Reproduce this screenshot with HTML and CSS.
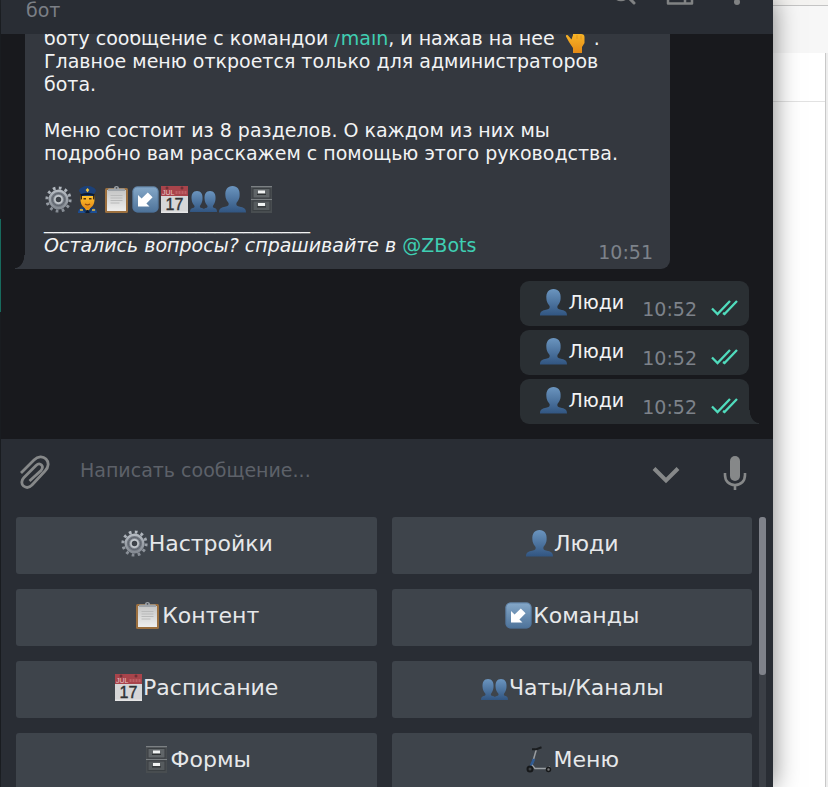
FILE: index.html
```
<!DOCTYPE html>
<html lang="ru">
<head>
    <meta charset="UTF-8">
    <meta name="viewport" content="width=device-width, initial-scale=1.0">
    <title>Чат с ботом</title>
    <link rel="stylesheet" href="styles.css">
</head>
<body>
    <!-- Emoji used in the messages and on the keyboard -->
    <svg class="sprite" aria-hidden="true">
        <defs>
            <linearGradient id="blue" x1="0" y1="0" x2="0" y2="1">
                <stop offset="0" stop-color="#6b95bf"/>
                <stop offset="1" stop-color="#315581"/>
            </linearGradient>
            <linearGradient id="tile" x1="0" y1="0" x2="0" y2="1">
                <stop offset="0" stop-color="#86a9c9"/>
                <stop offset="1" stop-color="#4d7299"/>
            </linearGradient>
            <linearGradient id="steel" x1="0" y1="0" x2="0" y2="1">
                <stop offset="0" stop-color="#b4bac1"/>
                <stop offset="1" stop-color="#858b93"/>
            </linearGradient>
            <linearGradient id="paper" x1="0" y1="0" x2="0" y2="1">
                <stop offset="0" stop-color="#c4c5c5"/>
                <stop offset="1" stop-color="#eeeeed"/>
            </linearGradient>
            <linearGradient id="skin" x1="0" y1="0" x2="0" y2="1">
                <stop offset="0" stop-color="#ffc62e"/>
                <stop offset="1" stop-color="#e58a16"/>
            </linearGradient>
        </defs>
        <symbol id="gear" viewBox="0 0 27 27">
            <circle cx="13.5" cy="13.5" r="11.6" fill="none" stroke="url(#steel)" stroke-width="3" stroke-dasharray="2.7 3.37"/>
            <circle cx="13.5" cy="13.5" r="8.8" fill="#70767f" stroke="url(#steel)" stroke-width="2.4"/>
            <circle cx="13.5" cy="13.5" r="6" fill="#858b94" stroke="#5d636c" stroke-width="1"/>
            <circle cx="13.5" cy="13.5" r="3.6" fill="#3d4249" stroke="#c3c8cd" stroke-width="1.7"/>
        </symbol>
        <symbol id="police" viewBox="0 0 27 27">
            <path d="M4 27c0-4 3-6 9.500-6s9.500 2 9.500 6z" fill="#1d4e94"/>
            <path d="M10 19h7v3l-3.500 4-3.500-4z" fill="#e79c1a"/>
            <path d="M10 21l3.500 6L17 21l2 1-3 5h-5l-3-5z" fill="#163766"/>
            <path d="M12.500 24h2l1 3h-4z" fill="#0b1b33"/>
            <path d="M6.500 9h14v5c0 5-3.500 8.500-7 8.500S6.500 19 6.500 14z" fill="url(#skin)"/>
            <path d="M6 8h2v5l-1.200 1zM21 8h-2v5l1.200 1z" fill="#3c2914"/>
            <path d="M5 5c0-3 5-5 8.500-5S22 2 22 5l-2 3v2H7V8z" fill="#1c4179"/>
            <path d="M7 8c4-1.500 9-1.500 13 0v2c-4-1.200-9-1.200-13 0z" fill="#0c1a2f"/>
            <path d="M13.500 2l1.800 2-1.800 2.600L11.700 4z" fill="#f4c63c"/>
            <path d="M9.500 12.700h2.500M15 12.700h2.500" stroke="#50330d" stroke-width="1.500"/>
            <path d="M11 18q2.500 1.800 5 0" fill="none" stroke="#914c12" stroke-width="1.200"/>
            <path d="M6 24h3M18 24h3" stroke="#e9bd3a" stroke-width="1.300"/>
        </symbol>
        <symbol id="clipboard" viewBox="0 0 27 27">
            <rect x="2" y="2" width="23" height="25" rx="1.500" fill="#9c703f"/>
            <rect x="4" y="4" width="19" height="21" fill="url(#paper)"/>
            <path d="M7.500 9.500h12M7.500 12h12M7.500 14.500h12M7.500 17h9" stroke="#b9baba" stroke-width="1"/>
            <path d="M5 5V3.500q0-1 1-1h5C11 .8 12 0 13.500 0S16 .8 16 2.500h5q1 0 1 1V5z" fill="#9ea3a8"/>
            <circle cx="13.500" cy="1.800" r=".9" fill="#4c5056"/>
        </symbol>
        <symbol id="arrow" viewBox="0 0 27 27">
            <rect x=".5" y=".5" width="26" height="26" rx="5" fill="url(#tile)"/>
            <rect x="1" y="1" width="25" height="25" rx="4.500" fill="none" stroke="#4c719b" stroke-opacity=".6"/>
            <path d="M6 20.500V9l3.600 3.600 6.200-6.200 4.800 4.800-6.200 6.200 3.100 3.100z" fill="#fff"/>
        </symbol>
        <symbol id="calendar" viewBox="0 0 27 27">
            <path d="M0 0h27v27H0z" fill="#d6d6d7"/>
            <path d="M0 0h27v10H0z" fill="#a8444b"/>
            <path d="M0 25.500h27V27H0z" fill="#e6e6e6"/>
            <circle cx="6" cy="2" r="1.500" fill="#6f3137"/>
            <circle cx="21" cy="2" r="1.500" fill="#6f3137"/>
            <path d="M14.500 6.500h11" stroke="#bd5f65" stroke-width="3" stroke-dasharray="2 1"/>
            <text class="cal-month" x="1" y="9">JUL</text>
            <text class="cal-day" x="13.500" y="24" text-anchor="middle">17</text>
        </symbol>
        <symbol id="people" viewBox="0 0 27 27">
            <path d="M13 26c0-3 1-3.800 3.700-4.300 1.100-.3 1-1.600.4-2.500-1.500-1.500-2.300-3.500-2.500-5.900C14.200 8 16 5 20 5s6 3 5.500 8.300c-.2 2.400-1 4.400-2.200 5.900-.6.900-.6 2.200.4 2.500 2.500.5 3.300 1.300 3.300 4.300z" fill="url(#blue)"/>
            <path d="M0 26c0-3 1-3.800 3.700-4.300 1.100-.3 1-1.600.4-2.500-1.500-1.500-2.300-3.500-2.500-5.900C1.200 8 3 5 7 5s6 3 5.500 8.300c-.2 2.400-1 4.400-2.200 5.900-.6.900-.6 2.200.4 2.500 3 .5 4 1.300 4 4.300z" fill="url(#blue)"/>
        </symbol>
        <symbol id="person" viewBox="0 0 27 27">
            <path d="M0 26.500c0-3.600 1.500-4.700 5-5.500 3-.6 4.700-1.200 4.700-3 0-1-.4-1.600-1.200-2.500-1.300-1.600-1.900-3.400-2.100-5.700C5.800 3.400 8.700 0 13.500 0s7.700 3.400 7.100 9.800c-.2 2.300-.8 4.100-2.100 5.700-.8.900-1.200 1.500-1.200 2.500 0 1.800 1.700 2.400 4.700 3 3.500.8 5 1.900 5 5.500z" fill="url(#blue)"/>
        </symbol>
        <symbol id="cabinet" viewBox="0 0 27 27">
            <rect x="3" y="0" width="21" height="27" fill="#484d50"/>
            <path d="M3 .7h21M3 13.500h21" stroke="#7b8083" stroke-width="1.200"/>
            <rect x="5" y="2.500" width="17" height="9.500" fill="#606568" stroke="#3a3f42"/>
            <rect x="5" y="15" width="17" height="9.500" fill="#565b5e" stroke="#3a3f42"/>
            <path d="M10 4.500h7v3h-7zM10 17h7v3h-7z" fill="#f0f2f2"/>
            <path d="M9 8.300h9M9 20.800h9" stroke="#2d3133" stroke-width="1.200"/>
        </symbol>
        <symbol id="scooter" viewBox="0 0 27 27">
            <path d="M5 22L10.500 3" stroke="#9a9ea1" stroke-width="1.500"/>
            <path d="M6 3.200h4.500l5-2" fill="none" stroke="#1a1d1f" stroke-width="2"/>
            <path d="M4.500 21l3.500-8" stroke="#2f5b94" stroke-width="2.600"/>
            <path d="M6 19l3 3.500h12l3-1.500" fill="none" stroke="#9a9fa4" stroke-width="1.500"/>
            <circle cx="4" cy="23" r="2.500" fill="#3d4145" stroke="#16181a" stroke-width="2"/>
            <circle cx="22.500" cy="23.500" r="2" fill="#777" stroke="#16181a" stroke-width="1.500"/>
        </symbol>
        <symbol id="finger" viewBox="0 0 27 27">
            <path d="M12 0h4v8h4q3.500 0 3.500 3v6l-2.500 4v6h-9v-5l-4-6-3-5.500c-.4-1.500 1.600-2 2.500-.5l3 3.500L12 9z" fill="url(#skin)"/>
            <path d="M16 9v4M20 9.500v4" stroke="#dc9219" stroke-width=".8"/>
        </symbol>
        <symbol id="checks" viewBox="0 0 27 16">
            <path d="M1 8.500l5.500 5.500L19 1M12 13l1.500 1L26 1" fill="none" stroke="#50dcbd" stroke-width="2.300"/>
        </symbol>
    </svg>

    <div class="edge"><div class="edge-mark"></div></div>

    <main class="app">
        <header class="header">
            <span class="status">бот</span>
            <div class="header-icons">
                <button aria-label="Поиск"><svg width="24" height="24" viewBox="0 0 24 24"><circle cx="9" cy="10" r="8" fill="none" stroke="#808283" stroke-width="2.500"/><path d="M15 14l7 7" stroke="#808283" stroke-width="3" stroke-linecap="round"/></svg></button>
                <button aria-label="Боковая панель"><svg width="28" height="24" viewBox="0 0 28 24"><path d="M2 3h24v18.500H2zM19 3v19" fill="none" stroke="#808283" stroke-width="2.500" stroke-linejoin="round"/></svg></button>
                <button aria-label="Ещё"><svg width="6" height="24" viewBox="0 0 6 24"><circle cx="3" cy="4" r="3" fill="#808283"/><circle cx="3" cy="12" r="3" fill="#808283"/><circle cx="3" cy="20" r="3" fill="#808283"/></svg></button>
            </div>
        </header>

        <section class="chat">
            <article class="bubble incoming">
                <p>
                    боту сообщение с командой <a href="#">/main</a>, и нажав на нее <svg class="emoji"><use href="#finger"/></svg> .<br>
                    Главное меню откроется только для администраторов<br>
                    бота.
                </p>
                <p>
                    Меню состоит из 8 разделов. О каждом из них мы<br>
                    подробно вам расскажем с помощью этого руководства.
                </p>
                <div class="emoji-row">
                    <svg class="emoji"><use href="#gear"/></svg>
                    <svg class="emoji"><use href="#police"/></svg>
                    <svg class="emoji"><use href="#clipboard"/></svg>
                    <svg class="emoji"><use href="#arrow"/></svg>
                    <svg class="emoji"><use href="#calendar"/></svg>
                    <svg class="emoji"><use href="#people"/></svg>
                    <svg class="emoji"><use href="#person"/></svg>
                    <svg class="emoji"><use href="#cabinet"/></svg>
                </div>
                <div>____________________________</div>
                <div class="message-end">
                    <span><em>Остались вопросы? спрашивайте в</em> <a href="#">@ZBots</a></span>
                    <time>10:51</time>
                </div>
            </article>

            <article class="bubble outgoing">
                <span class="label"><svg class="emoji"><use href="#person"/></svg>Люди</span>
                <time>10:52</time>
                <svg class="checks"><use href="#checks"/></svg>
            </article>
            <article class="bubble outgoing">
                <span class="label"><svg class="emoji"><use href="#person"/></svg>Люди</span>
                <time>10:52</time>
                <svg class="checks"><use href="#checks"/></svg>
            </article>
            <article class="bubble outgoing last">
                <span class="label"><svg class="emoji"><use href="#person"/></svg>Люди</span>
                <time>10:52</time>
                <svg class="checks"><use href="#checks"/></svg>
            </article>
        </section>

        <form class="composer">
            <button type="button" aria-label="Прикрепить файл">
                <svg width="32" height="36" viewBox="0 0 32 36"><path d="M2 18L15 5c4-4 9-4 12-1s3 8-1 12L13 30c-3 3-6 3-8.500 1s-2-6 .5-8.500L17 10.500c2-2 4-2 5.500-.5s1 3.500-.5 5.500L10.500 26" fill="none" stroke="#868889" stroke-width="2.800"/></svg>
            </button>
            <input type="text" aria-label="Сообщение" placeholder="Написать сообщение...">
            <button type="button" aria-label="Скрыть клавиатуру">
                <svg width="28" height="36" viewBox="0 0 28 36"><path d="M2 13.500l12 12 12-12" fill="none" stroke="#868889" stroke-width="4"/></svg>
            </button>
            <button type="button" aria-label="Голосовое сообщение">
                <svg width="24" height="36" viewBox="0 0 24 36"><rect x="7" y="1" width="10" height="25" rx="5" fill="#868889"/><path d="M2 18v2c0 6 4 10 10 10s10-4 10-10v-2M12 30v5" fill="none" stroke="#868889" stroke-width="2.600"/></svg>
            </button>
        </form>

        <section class="keyboard">
            <div class="keys">
                <button><svg class="emoji"><use href="#gear"/></svg>Настройки</button>
                <button><svg class="emoji"><use href="#person"/></svg>Люди</button>
                <button><svg class="emoji"><use href="#clipboard"/></svg>Контент</button>
                <button><svg class="emoji"><use href="#arrow"/></svg>Команды</button>
                <button><svg class="emoji"><use href="#calendar"/></svg>Расписание</button>
                <button><svg class="emoji"><use href="#people"/></svg>Чаты/Каналы</button>
                <button><svg class="emoji"><use href="#cabinet"/></svg>Формы</button>
                <button><svg class="emoji"><use href="#scooter"/></svg>Меню</button>
            </div>
            <div class="track"><div class="thumb"></div></div>
        </section>
    </main>

    <!-- Window behind the chat -->
    <aside class="behind">
        <div class="behind-title"></div>
        <div class="behind-bar"></div>
        <div class="behind-page"><div class="behind-head"></div></div>
    </aside>
</body>
</html>
```
FILE: styles.css
```
* {
    box-sizing: border-box;
}
body {
    margin: 0;
    height: 100vh;
    display: flex;
    overflow: hidden;
    background: #fff;
    font-family: "DejaVu Sans", sans-serif;
    font-size: 19px;
    line-height: 23px;
    color: #f2f3f4;
}
button {
    padding: 0;
    border: none;
    background: none;
    color: inherit;
    font: inherit;
    cursor: pointer;
}
svg {
    display: block;
}
a {
    color: #3fcfb3;
    text-decoration: none;
}
p {
    margin: 0 0 23px;
}
time {
    color: #7d828a;
}
.sprite {
    position: absolute;
    width: 0;
    height: 0;
}
.cal-month {
    font: 7px "Liberation Sans", sans-serif;
    fill: #e6c3c5;
}
.cal-day {
    font: 16px "Liberation Sans", sans-serif;
    fill: #303234;
    stroke: #303234;
    stroke-width: 0.4px;
}
.emoji {
    display: inline-block;
    flex: none;
    width: 27px;
    height: 27px;
    margin: -2px 1px;
    vertical-align: middle;
}
p .emoji {
    margin: -4px 0;
}

/* Left edge of the desktop */
.edge {
    flex: none;
    width: 1px;
    padding-top: 219px;
    background: #22262b;
}
.edge-mark {
    height: 93px;
    background: #1f8d7c;
}

.app {
    position: relative;
    flex: 1;
    min-width: 0;
    display: flex;
    flex-direction: column;
    background: #292d34;
    box-shadow: 0 0 24px rgba(0, 0, 0, 0.5);
}

/* Header */
.header {
    flex: none;
    height: 34px;
    display: flex;
    justify-content: space-between;
    padding: 0 33px 0 25px;
    overflow: hidden;
}
.status {
    margin-top: -1px;
    color: #7b7f86;
}
.header-icons {
    display: flex;
    align-items: flex-end;
    height: 24px;
    gap: 30px;
    margin-top: -18px;
}
.header-icons button:last-child {
    margin-left: 10px;
}

/* Messages */
.chat {
    flex: 1;
    min-height: 0;
    display: flex;
    flex-direction: column;
    justify-content: flex-end;
    align-items: flex-end;
    gap: 4px;
    padding: 0 24px 15px;
    overflow: hidden;
    background: #18191d;
}
.bubble {
    flex: none;
    position: relative;
    border-radius: 9px;
}
.incoming {
    align-self: flex-start;
    width: 645px;
    max-width: 100%;
    margin-bottom: 8px;
    padding: 12px 17px 5px 19px;
    border-bottom-left-radius: 0;
    background: #34383f;
}
.incoming::before,
.last::after {
    content: "";
    position: absolute;
    bottom: 0;
    width: 10px;
    height: 14px;
}
.incoming::before {
    right: 100%;
    background: radial-gradient(ellipse 10px 14px at 0 0, transparent 90%, #34383f 96%);
}
.last::after {
    left: 100%;
    background: radial-gradient(ellipse 10px 14px at 100% 0, transparent 90%, #2a2f33 96%);
}
.emoji-row {
    display: flex;
    height: 23px;
}
.message-end {
    display: flex;
    justify-content: space-between;
}
.message-end time,
.outgoing time {
    margin-top: 7px;
}
.outgoing {
    display: flex;
    padding: 10px 11px 5px 19px;
    background: #2a2f33;
}
.last {
    border-bottom-right-radius: 0;
}
.label {
    display: flex;
    margin-right: 18px;
}
.checks {
    width: 27px;
    height: 16px;
    margin: 9px 0 0 14px;
}

/* Message input */
.composer {
    flex: none;
    display: flex;
    align-items: center;
    padding: 16px 26px 26px 18px;
}
.composer input {
    flex: 1;
    min-width: 0;
    margin: 0 20px 6px 29px;
    padding: 0;
    border: none;
    outline: none;
    background: none;
    color: inherit;
    font: inherit;
}
.composer input::placeholder {
    color: #5d6169;
    opacity: 1;
}
.composer button + button {
    margin-left: 43px;
}

/* Bot keyboard */
.keyboard {
    flex: none;
    height: 270px;
    display: flex;
    padding: 0 7px 0 15px;
    overflow: hidden;
}
.keys {
    flex: 1;
    display: grid;
    grid-template-columns: 1fr 1fr;
    grid-auto-rows: 57px;
    gap: 15px;
}
.keys button {
    display: flex;
    align-items: center;
    justify-content: center;
    padding-bottom: 4px;
    border-radius: 3px;
    background: #3e444b;
    color: #e6e8ea;
    font-size: 22px;
}
.track {
    width: 7px;
    margin-left: 7px;
    border-radius: 3px 3px 0 0;
    background: #3b3f46;
}
.thumb {
    height: 158px;
    border-radius: 3px;
    background: #7f828a;
}

/* Window behind the chat */
.behind {
    flex: none;
    width: 55px;
    display: flex;
    flex-direction: column;
}
.behind-title {
    height: 6px;
    border-bottom: 1px solid #c4c4c4;
    background: #f4f3f1;
}
.behind-bar {
    height: 47px;
    background: #f7f7f7;
}
.behind-page {
    flex: 1;
    margin-right: 2px;
    border-right: 1px solid #c8c8c8;
    box-shadow: 2px 0 #ededed;
}
.behind-head {
    height: 49px;
    border-bottom: 1px solid #e2e2e2;
}
```
